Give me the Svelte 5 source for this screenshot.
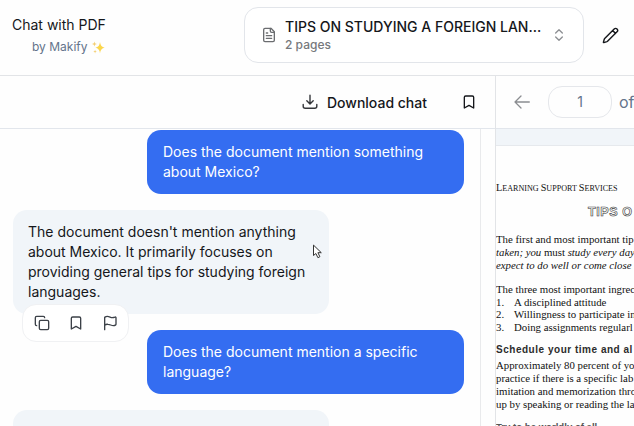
<script>
  const documentTitle = 'TIPS ON STUDYING A FOREIGN LAN...';
</script>

<div class="app">
  <header>
    <div class="brand">
      <span class="name">Chat with PDF</span>
      <span class="by">by Makify
        <svg class="sparkles" width="13" height="13" viewBox="0 0 13 13"><path fill="#fbd64c" d="M8 1Q8.5 6 12.7 6.7Q8.5 7.4 8 12.2Q7.5 7.4 3.4 6.7Q7.5 6 8 1Z"/><path fill="#f3ce72" d="M2.4.5 3 2.3 4.8 3 3 3.7 2.4 5.5 1.8 3.7 0 3 1.8 2.3ZM3.1 8.7l.4 1.3 1.3.5-1.3.5-.4 1.4-.5-1.4-1.3-.5 1.3-.5Z"/></svg>
      </span>
    </div>
    <button class="selector">
      <svg class="file" width="16" height="16" viewBox="0 0 24 24"><path d="M15 2H6a2 2 0 0 0-2 2v16a2 2 0 0 0 2 2h12a2 2 0 0 0 2-2V7Z"/><path d="M14 2v4a2 2 0 0 0 2 2h4M10 9H8M16 13H8M16 17H8"/></svg>
      <span class="doc"><b>{documentTitle}</b><small>2 pages</small></span>
      <svg class="updown" width="16" height="16" viewBox="0 0 24 24"><path d="m7 15 5 5 5-5M7 9l5-5 5 5"/></svg>
    </button>
    <svg class="pencil" width="17" height="17" viewBox="0 0 24 24"><path d="M21.2 6.8a2.8 2.8 0 0 0-4-4L3.8 16.2a2 2 0 0 0-.5.8L2 21.4a.5.5 0 0 0 .6.6L7 20.7a2 2 0 0 0 .8-.5ZM15 5l4 4"/></svg>
  </header>

  <main>
    <section class="chat">
      <div class="bar chatbar">
        <svg class="download" width="16" height="16" viewBox="0 0 16 16"><path d="M8 1.2v8.6M4.8 6.7 8 9.9l3.2-3.2M1.2 10.5v1.7q0 2 2 2h9.6q2 0 2-2v-1.7"/></svg>
        <span>Download chat</span>
        <svg class="mark" width="16" height="16" viewBox="0 0 24 24"><path d="M19 21l-7-4-7 4V5a2 2 0 0 1 2-2h10a2 2 0 0 1 2 2Z"/></svg>
      </div>
      <div class="body">
        <div class="messages">
          <div class="bubble user">Does the document mention something<br />about Mexico?</div>
          <div class="bubble bot">
            The document doesn't mention anything<br />about Mexico. It primarily focuses on<br />providing general tips for studying foreign<br />languages.
            <div class="actions">
              <svg width="16" height="16" viewBox="0 0 24 24"><rect x="8" y="8" width="14" height="14" rx="2"/><path d="M4 16a2 2 0 0 1-2-2V4a2 2 0 0 1 2-2h10a2 2 0 0 1 2 2"/></svg>
              <svg width="16" height="16" viewBox="0 0 24 24"><path d="M19 21l-7-4-7 4V5a2 2 0 0 1 2-2h10a2 2 0 0 1 2 2Z"/></svg>
              <svg width="16" height="16" viewBox="0 0 24 24"><path d="M4 22V4a1 1 0 0 1 .4-.8A6 6 0 0 1 8 2c3 0 5 2 7.3 2q2 0 4.1-.8A1 1 0 0 1 21 4v10a1 1 0 0 1-.4.8A6 6 0 0 1 17 16c-3 0-5-2-8-2a6 6 0 0 0-5 1.5"/></svg>
            </div>
            <svg class="cursor" width="12" height="16" viewBox="0 0 12 16"><path d="M1.5 1.5v10l2.4-2 2 4.2 2-1-2-4h3Z"/></svg>
          </div>
          <div class="bubble user">Does the document mention a specific<br />language?</div>
          <div class="bubble bot next"></div>
        </div>
      </div>
    </section>

    <section class="pdf">
      <div class="bar pager">
        <svg class="arrow" width="16" height="16" viewBox="0 0 16 16"><path d="M15.3 8H1M7 2 1 8l6 6"/></svg>
        <span class="num">1</span>
        <span class="of">of</span>
      </div>
      <div class="sheet">
        <div class="caps"><i>L</i>EARNING <i>S</i>UPPORT <i>S</i>ERVICES</div>
        <div class="title">TIPS O</div>
        <p>The first and most important tip<br /><em>taken; you</em> must <em>study every day</em><br /><em>expect to do well or come close</em></p>
        <div class="list">
          <span>The three most important ingrec</span>
          <span><u>1.</u>A disciplined attitude</span>
          <span><u>2.</u>Willingness to participate in</span>
          <span><u>3.</u>Doing assignments regularl</span>
        </div>
        <h2>Schedule your time and al</h2>
        <p class="last">Approximately 80 percent of yo<br />practice if there is a specific lab<br />imitation and memorization thro<br />up by speaking or reading the la</p>
        <h2 class="cut">Try to be worldly of all</h2>
      </div>
    </section>
  </main>
</div>

<style>
  .app { width: 634px; height: 426px; overflow: hidden; background: #fefefe; font-family: Inter, "Liberation Sans", sans-serif; color: #15171b; display: flex; flex-direction: column; }
  svg { flex: none; fill: none; stroke: currentColor; stroke-width: 2; stroke-linecap: round; stroke-linejoin: round; }
  header { box-sizing: border-box; height: 76px; flex: none; border-bottom: 1px solid #e2e4e7; display: flex; align-items: flex-start; padding: 7px 0 0 12px; }
  .brand { width: 93px; margin-right: 139px; padding-top: 8px; display: flex; flex-direction: column; align-items: flex-start; }
  .name { font-size: 14px; line-height: 20px; white-space: nowrap; }
  .by { font-size: 12px; line-height: 20px; margin: 2px 0 0 20px; color: #64748b; display: flex; align-items: center; gap: 4px; white-space: nowrap; }
  .sparkles { stroke: none; }
  .selector { box-sizing: border-box; width: 340px; height: 56px; flex: none; border: 1px solid #e2e5ea; border-radius: 14px; background: #fff; padding: 0 16px; display: flex; align-items: center; font-family: inherit; text-align: left; color: #15171b; }
  .file { color: #6b6d70; margin-right: 8px; }
  .doc { width: 266px; display: flex; flex-direction: column; white-space: nowrap; }
  .doc b { font-size: 14px; font-weight: 500; line-height: 20px; }
  .doc small { font-size: 12px; line-height: 16px; font-weight: 500; color: #76787c; }
  .updown { color: #8d8f93; }
  .pencil { margin: 20px 0 0 18px; }
  main { display: flex; flex: 1; min-height: 0; }
  .chat { width: 495px; flex: none; border-right: 1px solid #e2e4e7; display: flex; flex-direction: column; }
  .bar { height: 52px; flex: none; border-bottom: 1px solid #e2e6ec; display: flex; align-items: center; }
  .chatbar { font-size: 14px; font-weight: 500; justify-content: flex-end; padding-right: 18px; }
  .chatbar span { margin: 0 34px 0 9px; }
  .download { color: #34363a; stroke-width: 1.4; }
  .body { flex: 1; min-height: 0; overflow: hidden; display: flex; }
  .messages { width: 451px; padding: 1px 16px 0 13px; border-right: 1px solid #e9eaec; display: flex; flex-direction: column; gap: 16px; }
  .bubble { box-sizing: border-box; border-radius: 14px; padding: 12px 16px; font-size: 14px; line-height: 20px; white-space: nowrap; flex: none; }
  .user { width: 317px; height: 64px; align-self: flex-end; background: #346df1; color: #fff; }
  .bot { position: relative; width: 316px; height: 104px; background: #f1f5f9; padding-left: 15px; }
  .next { height: 80px; }
  .actions { position: absolute; left: 9px; top: 94px; width: 107px; height: 38px; box-sizing: border-box; border: 1px solid #f0f1f3; border-radius: 14px; background: #fff; display: flex; align-items: center; gap: 18px; padding-left: 11px; color: #3c4148; }
  .cursor { position: absolute; left: 299px; top: 34px; fill: #fff; color: #333; stroke-width: 1; }
  .pdf { flex: 1; min-width: 0; background: #f1f5f9; }
  .pager { background: #fefefe; color: #64748b; }
  .arrow { margin: 0 18px; color: #8b8d91; stroke-width: 1.3; }
  .num { box-sizing: border-box; flex: none; width: 64px; height: 32px; border: 1px solid #e5e7eb; border-radius: 14px; font-size: 14px; line-height: 30px; text-align: center; }
  .of { font-size: 16px; margin-left: 7px; }
  .sheet { margin-top: 16px; height: 281px; overflow: hidden; border-top: 1px solid #e6e9ed; background: #fefefe; font-family: "Liberation Serif", serif; font-size: 10.8px; line-height: 13px; white-space: nowrap; color: #111; box-sizing: border-box; }
  .caps { font-size: 8.1px; padding-top: 35px; }
  .caps i { font-style: normal; font-size: 10.2px; }
  .title { font-family: "Liberation Sans", sans-serif; font-weight: 700; font-size: 12.5px; line-height: 16px; letter-spacing: .6px; margin: 9px 0 0 92px; color: #fff; -webkit-text-stroke: .6px #333; }
  p { margin: 13px 0 0; }
  .list { display: flex; flex-direction: column; margin-top: 11px; line-height: 12.6px; }
  .list u { display: inline-block; width: 18px; text-decoration: none; }
  h2 { font: 700 10px/13px "Liberation Sans", sans-serif; margin: 10px 0 0; letter-spacing: .52px; color: #2c2c2c; }
  .last { margin-top: 3px; line-height: 12.8px; }
  .cut { margin-top: 9px; letter-spacing: 0; font-size: 9.6px; color: #555; }
</style>
